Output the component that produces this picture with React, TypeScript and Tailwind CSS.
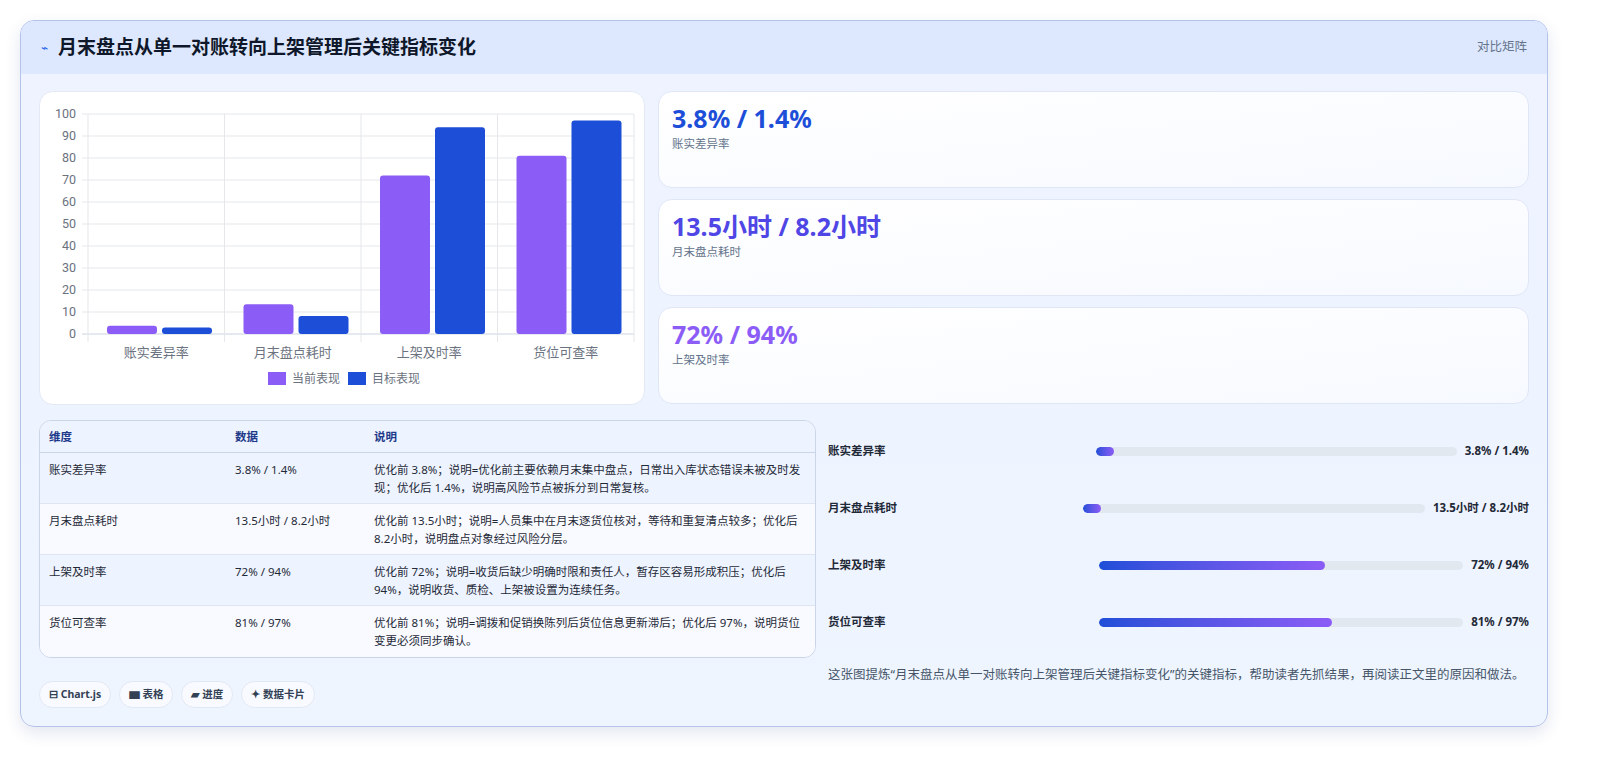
import React from "react";

const cats = ["账实差异率", "月末盘点耗时", "上架及时率", "货位可查率"];
const cur = [3.8, 13.5, 72, 81];
const tgt = [2.9, 8.2, 94, 97];

function Chart() {
  const x0 = 48, x1 = 594, yTop = 22, yBot = 242;
  const cw = (x1 - x0) / 4;
  const y = (v: number) => yBot - (v / 100) * (yBot - yTop);
  return (
    <svg width="606" height="314" viewBox="0 0 606 314" className="block">
      {Array.from({ length: 11 }, (_, i) => i * 10).map((v) => (
        <g key={v}>
          <line x1={x0 - 6} x2={x1} y1={y(v)} y2={y(v)} stroke={v === 0 ? "#cbd5e1" : "#e5e7eb"} strokeWidth="1" />
          <text x={x0 - 12} y={y(v) + 4} textAnchor="end" fontSize="12.5" fill="#6b7280" fontFamily="Roboto, 'Liberation Sans', sans-serif">{v}</text>
        </g>
      ))}
      {[0, 1, 2, 3, 4].map((i) => (
        <line key={i} x1={x0 + i * cw} x2={x0 + i * cw} y1={yTop} y2={yBot + 8} stroke="#e5e7eb" />
      ))}
      {cats.map((c, i) => {
        const bx = x0 + i * cw + 19;
        return (
          <g key={c}>
            <rect x={bx} y={y(cur[i])} width="50" height={yBot - y(cur[i])} rx="3" fill="#8b5cf6" />
            <rect x={bx + 55} y={y(tgt[i])} width="50" height={yBot - y(tgt[i])} rx="3" fill="#1d4ed8" />
            <text x={x0 + i * cw + cw / 2} y="265" textAnchor="middle" fontSize="13" fill="#6b7280" fontFamily="'Noto Sans CJK SC', sans-serif">{c}</text>
          </g>
        );
      })}
      <rect x="228" y="280" width="18" height="13" fill="#8b5cf6" />
      <text x="252" y="291" fontSize="12" fill="#6b7280" fontFamily="'Noto Sans CJK SC', sans-serif">当前表现</text>
      <rect x="308" y="280" width="18" height="13" fill="#1d4ed8" />
      <text x="332" y="291" fontSize="12" fill="#6b7280" fontFamily="'Noto Sans CJK SC', sans-serif">目标表现</text>
    </svg>
  );
}

const stats = [
  { v: "3.8% / 1.4%", l: "账实差异率", c: "text-[#1d4ed8]" },
  { v: "13.5小时 / 8.2小时", l: "月末盘点耗时", c: "text-[#4f46e5]" },
  { v: "72% / 94%", l: "上架及时率", c: "text-[#8b5cf6]" },
];

const rows = [
  ["账实差异率", "3.8% / 1.4%", "优化前 3.8%；说明=优化前主要依赖月末集中盘点，日常出入库状态错误未被及时发现；优化后 1.4%，说明高风险节点被拆分到日常复核。"],
  ["月末盘点耗时", "13.5小时 / 8.2小时", "优化前 13.5小时；说明=人员集中在月末逐货位核对，等待和重复清点较多；优化后 8.2小时，说明盘点对象经过风险分层。"],
  ["上架及时率", "72% / 94%", "优化前 72%；说明=收货后缺少明确时限和责任人，暂存区容易形成积压；优化后 94%，说明收货、质检、上架被设置为连续任务。"],
  ["货位可查率", "81% / 97%", "优化前 81%；说明=调拨和促销换陈列后货位信息更新滞后；优化后 97%，说明货位变更必须同步确认。"],
];

const prog = [
  { l: "账实差异率", v: "3.8% / 1.4%", w: "5%" },
  { l: "月末盘点耗时", v: "13.5小时 / 8.2小时", w: "5%" },
  { l: "上架及时率", v: "72% / 94%", w: "62%" },
  { l: "货位可查率", v: "81% / 97%", w: "64%" },
];

export default function App() {
  return (
    <div className="w-[1615px] h-[769px] bg-white p-[20px] pr-[67px]" style={{ fontFamily: "'Noto Sans', 'Noto Sans CJK SC', sans-serif" }}>
      <div className="h-[707px] rounded-[14px] border border-[#b4c3ea] bg-gradient-to-b from-[#eef3ff] to-[#eef5ff] overflow-hidden shadow-[0_6px_16px_rgba(30,58,138,0.12)]">
        <div className="h-[53px] bg-[#dde8ff] flex items-center justify-between pl-[20px] pr-[20px]">
          <div className="flex items-center gap-[10px]">
            <span className="text-[#2563eb] text-[12px]">⌁</span>
            <span className="text-[19px] font-bold text-[#0f172a]">月末盘点从单一对账转向上架管理后关键指标变化</span>
          </div>
          <span className="text-[12.5px] text-[#64748b]">对比矩阵</span>
        </div>
        <div className="px-[18px] pt-[17px] flex flex-col">
          <div className="flex gap-[13px]">
            <div className="w-[606px] h-[314px] bg-white rounded-[14px] border border-[#e3e9f5]">
              <Chart />
            </div>
            <div className="flex-1 flex flex-col gap-[11px]">
              {stats.map((s) => (
                <div key={s.l} className="h-[97px] rounded-[14px] border border-[#dfe6f6] bg-gradient-to-br from-white to-[#f6f9ff] px-[13px] pt-[8px]">
                  <div className={`text-[25px] font-bold leading-[36px] ${s.c}`}>{s.v}</div>
                  <div className="text-[11.5px] text-[#64748b] leading-[16px]">{s.l}</div>
                </div>
              ))}
            </div>
          </div>
          <div className="flex gap-[12px] mt-[15px]">
            <div className="w-[777px] shrink-0 flex flex-col">
              <div className="rounded-[12px] border border-[#cbd5e8] overflow-hidden text-[11.5px] text-[#1f2937]">
                <div className="flex bg-[#eef4ff] h-[32px] items-center border-b border-[#cbd5e8] font-bold text-[#1e3a8a]">
                  <div className="w-[195px] pl-[9px]">维度</div>
                  <div className="w-[139px]">数据</div>
                  <div className="flex-1">说明</div>
                </div>
                {rows.map((r, i) => (
                  <div key={r[0]} className={`flex h-[51px] pt-[8px] ${i % 2 === 0 ? "bg-[#eef4ff]" : "bg-[#f8faff]"} ${i < 3 ? "border-b border-[#dfe6f3]" : ""}`}>
                    <div className="w-[195px] pl-[9px] leading-[18px]">{r[0]}</div>
                    <div className="w-[139px] leading-[18px]">{r[1]}</div>
                    <div className="flex-1 pr-[10px] leading-[18px]">{r[2]}</div>
                  </div>
                ))}
              </div>
              <div className="flex gap-[8px] mt-[23px]">
                {["⊟ Chart.js", "▆ 表格", "▰ 进度", "✦ 数据卡片"].map((c) => (
                  <span key={c} className="h-[27px] px-[9px] rounded-full bg-[#f8faff] border border-[#e2e8f3] text-[10.5px] font-bold text-[#334155] flex items-center">{c}</span>
                ))}
              </div>
            </div>
            <div className="flex-1 flex flex-col">
              <div className="flex flex-col">
                {prog.map((p) => (
                  <div key={p.l} className="h-[62px] flex items-center gap-[8px] -mt-[5px] first:mt-[0px]">
                    <div className="flex-[0.72_1_0%] text-[11.5px] font-bold text-[#1f2937]">{p.l}</div>
                    <div className="flex-[1_1_0%] h-[9px] rounded-full bg-[#e2e8f0] overflow-hidden">
                      <div className="h-full rounded-full bg-gradient-to-r from-[#1d4ed8] to-[#8b5cf6]" style={{ width: p.w, minWidth: "18px" }} />
                    </div>
                    <div className="text-[11.5px] font-bold text-[#1f2937] whitespace-nowrap">{p.v}</div>
                  </div>
                ))}
              </div>
              <p className="mt-[12px] text-[12.5px] leading-[20px] text-[#475569]">这张图提炼“月末盘点从单一对账转向上架管理后关键指标变化”的关键指标，帮助读者先抓结果，再阅读正文里的原因和做法。</p>
            </div>
          </div>
        </div>
      </div>
    </div>
  );
}
